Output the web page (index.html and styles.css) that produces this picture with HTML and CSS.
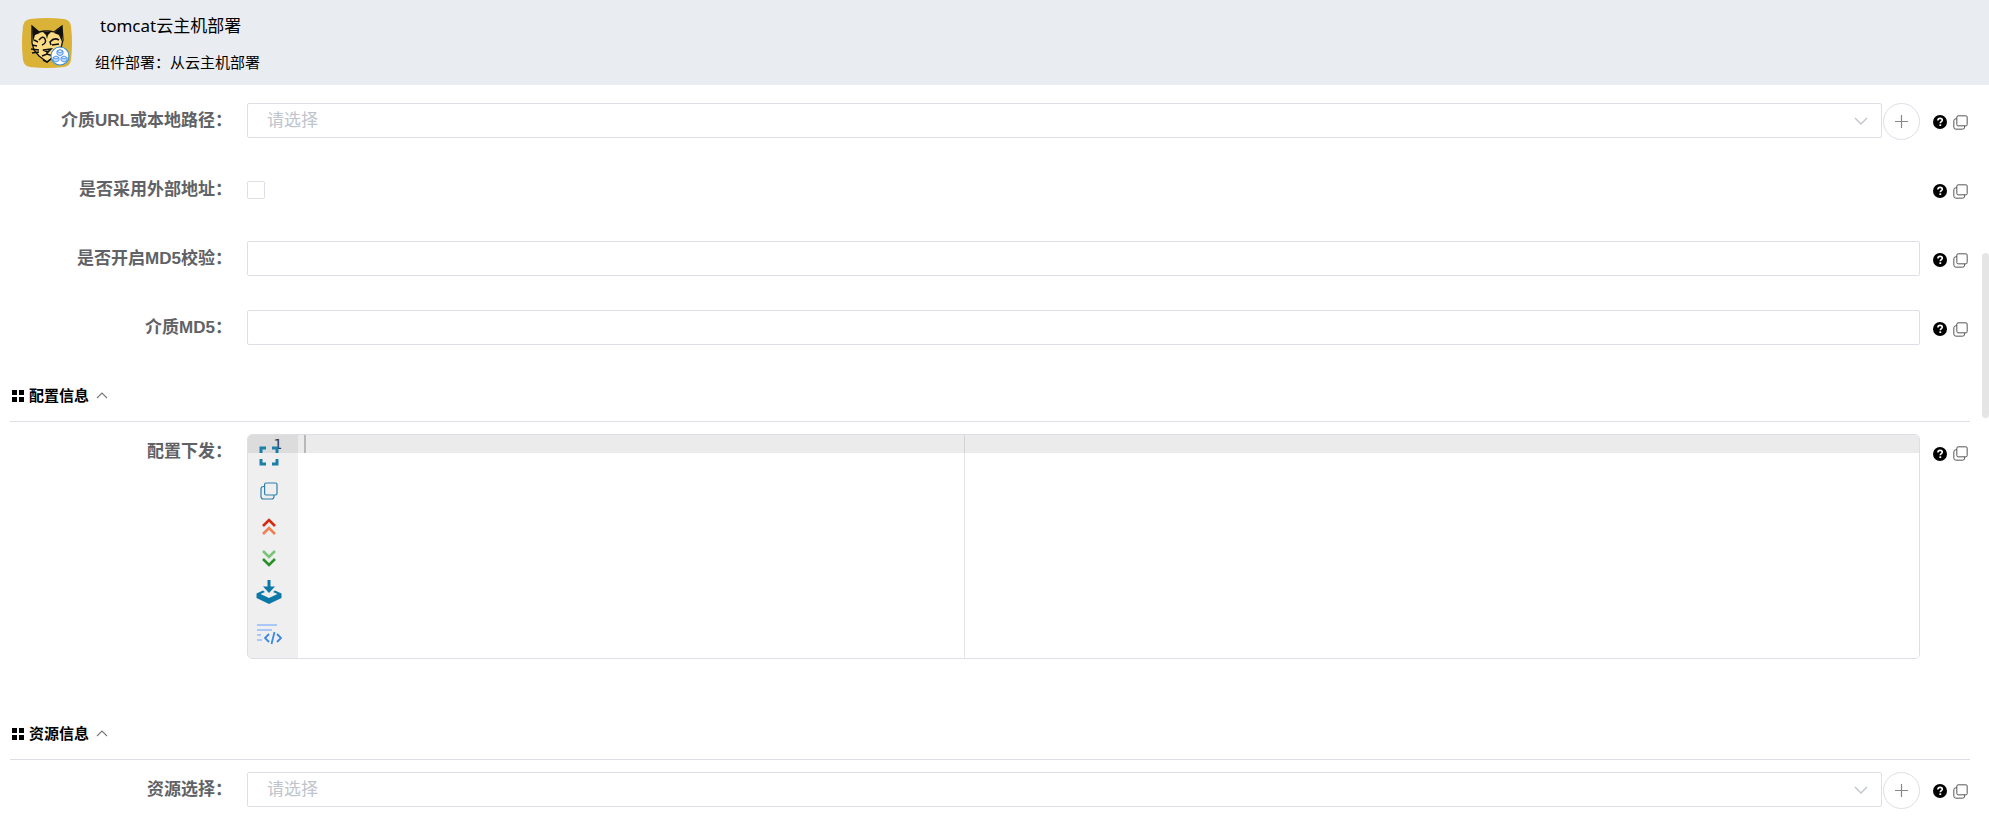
FILE: index.html
```html
<!DOCTYPE html>
<html lang="zh-CN">
<head>
<meta charset="utf-8">
<title>tomcat云主机部署</title>
<link rel="stylesheet" href="styles.css">
</head>
<body>
<svg class="sprite" aria-hidden="true">
  <symbol id="help" viewBox="0 0 14 14"><circle cx="7" cy="7" r="7" fill="#000"/><path d="M4.9 5.5C4.9 4.2 5.8 3.4 7.1 3.4s2.2.8 2.2 1.9c0 1.4-2 1.5-2 3" fill="none" stroke="#fff" stroke-width="1.6"/><path d="M6.4 9.3h1.8v1.7H6.4z" fill="#fff"/></symbol>
  <symbol id="copy" viewBox="0 0 18 18"><rect x="4.600" y="1" width="12.400" height="12" rx="1.500" fill="none" stroke="currentColor" stroke-width="1.200"/><path d="M4.600 4.500H3.500Q1 4.500 1 7v7.500Q1 17 3.500 17h8q2.500 0 2.500-2.500V13" fill="none" stroke="currentColor" stroke-width="1.200"/></symbol>
  <symbol id="grid" viewBox="0 0 12 12"><path d="M0 0h5v5H0zM7 0h5v5H7zM0 7h5v5H0zM7 7h5v5H7z" fill="#000"/></symbol>
  <symbol id="up" viewBox="0 0 12 7"><path d="M1 6l5-5 5 5" fill="none" stroke="#777" stroke-width="1.100"/></symbol>
  <symbol id="down" viewBox="0 0 14 8"><path d="M1 1l6 6 6-6" fill="none" stroke="#c0c4cc" stroke-width="1.400"/></symbol>
  <symbol id="plus" viewBox="0 0 13 13"><path d="M0 6.500h13M6.500 0v13" fill="none" stroke="#85888e" stroke-width="1.200"/></symbol>
</svg>

<header class="header">
  <svg class="logo" viewBox="0 0 50 50" role="img" aria-label="tomcat">
    <path d="M8 1Q25-1 42 1q6 1 7 7 2 17 0 34-1 6-7 7-17 2-34 0-6-1-7-7-2-17 0-34 1-6 7-7z" fill="#dbb238"/>
    <path d="M10 8l7 6q8-2 15 0l8-6 1 14-2 8-4 6-10 8-8-6-5-6-2-7z" fill="#fbdc84" stroke="#111" stroke-width="1.300"/>
    <path d="M10 8l8 7-5 2-2 7zM40 8l-8 7 5 2 3 7zM21 14h8l-3 3-1 4-1-4z" fill="#111"/>
    <path d="M17 22q4-5 6-1t-3 6M37 22q-5-3-9 2l1 3M37 26l-7 1M21 32l8-1-3 3zM25 34v3M20 38l5-2 6 2M10 27l5 1M9 31l8 1M10 35l7-1M12 22l4 2M36 30l4-1M21 42l4 2 4-3" fill="none" stroke="#111" stroke-width="1.500"/>
    <circle cx="38" cy="38" r="9" fill="#fff" stroke="#3d91d8" stroke-width="1.200"/>
    <path d="M38 31.500l3 1.500v3l-3 2-3-2v-3zM34 38l3 1.500v3L34 44l-3-1.500v-3zM42 38l3 1.500v3L42 44l-3-1.500v-3zM35 33l3 2 3-2M31 39.500l3 1.500 3-1.500M39 39.500l3 1.500 3-1.500" fill="#c4ddfb" stroke="#4d94ef" stroke-width="1"/>
  </svg>
  <div class="heading">
    <h1 class="title">tomcat云主机部署</h1>
    <p class="subtitle">组件部署：从云主机部署</p>
  </div>
</header>

<main class="form">
  <div class="row">
    <label class="label" for="url">介质URL或本地路径：</label>
    <div class="control">
      <div class="select-wrap"><select class="field select" id="url"><option>请选择</option></select><svg class="arrow"><use href="#down"/></svg></div>
      <button class="add" type="button" aria-label="新增"><svg class="plus"><use href="#plus"/></svg></button>
    </div>
    <div class="tools"><button class="tool" type="button" aria-label="帮助"><svg class="help"><use href="#help"/></svg></button><button class="tool" type="button" aria-label="复制"><svg class="copy"><use href="#copy"/></svg></button></div>
  </div>
  <div class="row">
    <label class="label" for="external">是否采用外部地址：</label>
    <div class="control control-check"><input class="check" type="checkbox" id="external"></div>
    <div class="tools"><button class="tool" type="button" aria-label="帮助"><svg class="help"><use href="#help"/></svg></button><button class="tool" type="button" aria-label="复制"><svg class="copy"><use href="#copy"/></svg></button></div>
  </div>
  <div class="row">
    <label class="label" for="verify">是否开启MD5校验：</label>
    <div class="control"><input class="field" type="text" id="verify"></div>
    <div class="tools"><button class="tool" type="button" aria-label="帮助"><svg class="help"><use href="#help"/></svg></button><button class="tool" type="button" aria-label="复制"><svg class="copy"><use href="#copy"/></svg></button></div>
  </div>
  <div class="row">
    <label class="label" for="md5">介质MD5：</label>
    <div class="control"><input class="field" type="text" id="md5"></div>
    <div class="tools"><button class="tool" type="button" aria-label="帮助"><svg class="help"><use href="#help"/></svg></button><button class="tool" type="button" aria-label="复制"><svg class="copy"><use href="#copy"/></svg></button></div>
  </div>

  <h2 class="section"><svg class="grid"><use href="#grid"/></svg>配置信息<svg class="fold"><use href="#up"/></svg></h2>
  <div class="row row-editor">
    <label class="label" for="config">配置下发：</label>
    <div class="editor">
      <div class="gutter">
        <span class="line-number">1</span>
        <div class="actions">
          <button class="action" type="button" aria-label="全屏"><svg width="20" height="20" viewBox="0 0 20 20"><path d="M7 2H2v5M13 2h5v5M7 18H2v-5M13 18h5v-5" fill="none" stroke="#1a80a8" stroke-width="3"/></svg></button>
          <button class="action action-copy" type="button" aria-label="复制"><svg width="18" height="18"><use href="#copy"/></svg></button>
          <button class="action action-up" type="button" aria-label="上移"><svg width="14" height="18" viewBox="0 0 14 18"><path d="M1 8l6-6 6 6" fill="none" stroke="#d42a10" stroke-width="2.600"/><path d="M1 16l6-6 6 6" fill="none" stroke="#f07e50" stroke-width="2.600"/></svg></button>
          <button class="action action-down" type="button" aria-label="下移"><svg width="14" height="18" viewBox="0 0 14 18"><path d="M1 2l6 6 6-6" fill="none" stroke="#76c576" stroke-width="2.600"/><path d="M1 10l6 6 6-6" fill="none" stroke="#289128" stroke-width="2.600"/></svg></button>
          <button class="action action-download" type="button" aria-label="下载"><svg width="26" height="25" viewBox="0 0 26 25"><path d="M11.500 1h3v6.500H19L13 14 7 7.500h4.500z" fill="#0c78a8"/><path d="M7 11.500L.5 14.500v4.500L13 25l12.500-6v-4.500L19 11.500l-2 1.500 4.500 2L13 19l-8.500-4L9 13z" fill="#0c78a8"/></svg></button>
          <button class="action action-code" type="button" aria-label="格式化代码"><svg width="26" height="22" viewBox="0 0 26 22"><path d="M1 2h20M1 7h15M1 12h4M1 17h5" fill="none" stroke="#a9c7f8" stroke-width="2"/><path d="M13 11l-4 4 4 4M21 11l4 4-4 4M18.500 9l-3 12" fill="none" stroke="#3e85e4" stroke-width="1.800"/></svg></button>
        </div>
      </div>
      <textarea class="code" id="config" spellcheck="false"></textarea>
      <span class="caret"></span>
      <span class="margin"></span>
    </div>
    <div class="tools tools-editor"><button class="tool" type="button" aria-label="帮助"><svg class="help"><use href="#help"/></svg></button><button class="tool" type="button" aria-label="复制"><svg class="copy"><use href="#copy"/></svg></button></div>
  </div>

  <h2 class="section section-spaced"><svg class="grid"><use href="#grid"/></svg>资源信息<svg class="fold"><use href="#up"/></svg></h2>
  <div class="row row-last">
    <label class="label" for="resource">资源选择：</label>
    <div class="control">
      <div class="select-wrap"><select class="field select" id="resource"><option>请选择</option></select><svg class="arrow"><use href="#down"/></svg></div>
      <button class="add" type="button" aria-label="新增"><svg class="plus"><use href="#plus"/></svg></button>
    </div>
    <div class="tools"><button class="tool" type="button" aria-label="帮助"><svg class="help"><use href="#help"/></svg></button><button class="tool" type="button" aria-label="复制"><svg class="copy"><use href="#copy"/></svg></button></div>
  </div>
</main>
<div class="scroll-thumb"></div>
</body>
</html>
```

FILE: styles.css
```css
* { box-sizing: border-box; }

body {
  min-height: 100vh;
  margin: 0;
  background: #fff;
  color: #000;
  font-family: "Liberation Sans", "Noto Sans CJK SC", sans-serif;
  font-size: 17px;
}

button {
  padding: 0;
  border: 0;
  background: none;
  cursor: pointer;
}

svg { display: block; flex: none; }

.sprite { position: absolute; width: 0; height: 0; }

.header {
  display: flex;
  align-items: center;
  gap: 23px;
  height: 85px;
  padding: 0 22px;
  background: #e9edf2;
}

.logo { width: 50px; height: 50px; }

.heading {
  display: flex;
  flex-direction: column;
  gap: 12px;
  padding-top: 2px;
}

.title {
  margin: 0;
  padding-left: 5px;
  font-family: "Noto Sans", "Noto Sans CJK SC", sans-serif;
  font-size: 17px;
  font-weight: 400;
  line-height: 25px;
}

.subtitle {
  margin: 0;
  font-size: 15px;
  line-height: 25px;
}

.form {
  display: flex;
  flex-direction: column;
  padding: 18px 19px 12px 10px;
}

.row {
  display: grid;
  grid-template-columns: 237px 1fr 50px;
  grid-template-rows: 35px;
  align-items: center;
  margin-bottom: 34px;
}

.label {
  padding-right: 15px;
  color: #606266;
  font-weight: 700;
  line-height: 35px;
  text-align: right;
  white-space: nowrap;
}

.control {
  display: flex;
  align-items: flex-start;
  gap: 1px;
  height: 35px;
}

.control-check { align-items: center; }

.field {
  display: block;
  width: 100%;
  height: 35px;
  padding: 0 19px;
  border: 1px solid #dcdfe6;
  border-radius: 2px;
  background: #fff;
  color: #606266;
  font: inherit;
  outline: none;
}

.select-wrap { position: relative; flex: 1; }

.select { appearance: none; color: #c0c4cc; }

.arrow {
  position: absolute;
  top: 14px;
  right: 14px;
  width: 14px;
  height: 8px;
  pointer-events: none;
}

.add {
  display: flex;
  flex: none;
  align-items: center;
  justify-content: center;
  width: 37px;
  height: 37px;
  border: 1px solid #dcdfe6;
  border-radius: 50%;
  background: #fff;
}

.plus { width: 13px; height: 13px; }

.check {
  appearance: none;
  width: 18px;
  height: 18px;
  margin: 0;
  border: 1px solid #dcdfe6;
  border-radius: 2px;
  background: #fff;
}

.tools {
  display: flex;
  align-items: center;
  gap: 6px;
  padding: 3px 0 0 13px;
}

.tools-editor { padding-top: 12px; }

.help { width: 14px; height: 14px; }
.copy { width: 15px; height: 15px; color: #555; }

.section {
  display: flex;
  align-items: center;
  height: 49px;
  margin: -6px 0 12px;
  padding: 0 0 3px 2px;
  border-bottom: 1px solid #dcdfe6;
  font-size: 15px;
  font-weight: 700;
  line-height: 21px;
}

.section-spaced { margin-top: 18px; }

.grid { width: 12px; height: 12px; margin-right: 5px; }
.fold { width: 12px; height: 7px; margin-left: 7px; }

.row-editor { grid-template-rows: auto; align-items: start; }
.row-last { margin-bottom: 0; }

.editor {
  position: relative;
  display: flex;
  height: 225px;
  overflow: hidden;
  border: 1px solid #dcdfe6;
  border-radius: 5px;
}

.gutter {
  position: relative;
  width: 50px;
  background: linear-gradient(#dcdcdc 18px, #efefef 18px);
}

.line-number {
  position: absolute;
  top: 0;
  right: 16px;
  color: #333;
  font-family: "DejaVu Sans Mono", monospace;
  font-size: 14px;
  line-height: 18px;
}

.actions {
  position: relative;
  display: flex;
  flex-direction: column;
  align-items: center;
  padding: 11px 8px 0 0;
}

.action-copy { margin-top: 16px; color: #2e80ad; }
.action-up { margin-top: 18px; }
.action-down { margin-top: 13px; }
.action-download { margin-top: 12px; }
.action-code { margin-top: 19px; }

.code {
  flex: 1;
  padding: 0 8px;
  border: 0;
  background: linear-gradient(#ebebeb 18px, #fff 18px);
  font-family: "DejaVu Sans Mono", monospace;
  font-size: 14px;
  line-height: 18px;
  outline: none;
  resize: none;
}

.caret {
  position: absolute;
  top: 0;
  left: 56px;
  width: 2px;
  height: 18px;
  background: #b8b8b8;
}

.margin {
  position: absolute;
  top: 0;
  bottom: 0;
  left: 716px;
  width: 1px;
  background: rgba(0, 0, 0, 0.1);
}

.scroll-thumb {
  position: absolute;
  top: 253px;
  right: 0;
  width: 7px;
  height: 165px;
  border-radius: 4px;
  background: #e5e5e5;
}
```
